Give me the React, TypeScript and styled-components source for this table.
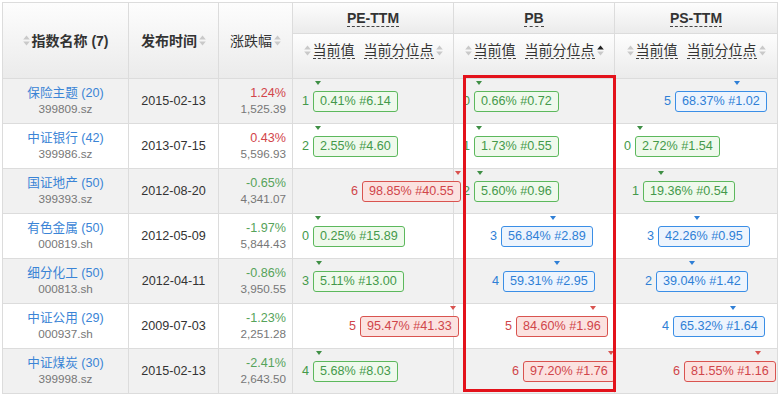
import React from 'react';
import styled, { createGlobalStyle } from 'styled-components';

const GlobalStyle = createGlobalStyle`
  html, body { margin: 0; padding: 0; background: #fff; }
  body {
    font-family: "Liberation Sans", "Noto Sans CJK SC", sans-serif;
    color: #333;
  }
`;

type Tone = 'g' | 'b' | 'r';

const tones: Record<Tone, { text: string; border: string; bg: string; mark: string }> = {
  g: { text: '#44994a', border: '#5cb85c', bg: '#eff9ec', mark: '#3f8f45' },
  b: { text: '#2f7fd6', border: '#3a8ee6', bg: '#edf4fd', mark: '#2f7fd6' },
  r: { text: '#d0454a', border: '#d9534f', bg: '#fbe2e0', mark: '#d9534f' },
};

const toneOf = (p: number): Tone => (p < 20 ? 'g' : p < 80 ? 'b' : 'r');

interface Val { r: number; p: number; v: string; off: number }
interface Row {
  name: string; n: number; code: string; date: string;
  chg: string; up: boolean; idx: string;
  pe: Val; pb: Val; ps: Val;
}

const rows: Row[] = [
  { name: '保险主题', n: 20, code: '399809.sz', date: '2015-02-13', chg: '1.24%', up: true, idx: '1,525.39',
    pe: { r: 1, p: 0.41, v: '6.14', off: 21 }, pb: { r: 0, p: 0.66, v: '0.72', off: 21 }, ps: { r: 5, p: 68.37, v: '1.02', off: 61 } },
  { name: '中证银行', n: 42, code: '399986.sz', date: '2013-07-15', chg: '0.43%', up: true, idx: '5,596.93',
    pe: { r: 2, p: 2.55, v: '4.60', off: 21 }, pb: { r: 1, p: 1.73, v: '0.55', off: 21 }, ps: { r: 0, p: 2.72, v: '1.54', off: 21 } },
  { name: '国证地产', n: 50, code: '399393.sz', date: '2012-08-20', chg: '-0.65%', up: false, idx: '4,341.07',
    pe: { r: 6, p: 98.85, v: '40.55', off: 70 }, pb: { r: 2, p: 5.6, v: '0.96', off: 21 }, ps: { r: 1, p: 19.36, v: '0.54', off: 29 } },
  { name: '有色金属', n: 50, code: '000819.sh', date: '2012-05-09', chg: '-1.97%', up: false, idx: '5,844.43',
    pe: { r: 0, p: 0.25, v: '15.89', off: 21 }, pb: { r: 3, p: 56.84, v: '2.89', off: 48 }, ps: { r: 3, p: 42.26, v: '0.95', off: 44 } },
  { name: '细分化工', n: 50, code: '000813.sh', date: '2012-04-11', chg: '-0.86%', up: false, idx: '3,950.55',
    pe: { r: 3, p: 5.11, v: '13.00', off: 21 }, pb: { r: 4, p: 59.31, v: '2.95', off: 50 }, ps: { r: 2, p: 39.04, v: '1.42', off: 42 } },
  { name: '中证公用', n: 29, code: '000937.sh', date: '2009-07-03', chg: '-1.23%', up: false, idx: '2,251.28',
    pe: { r: 5, p: 95.47, v: '41.33', off: 68 }, pb: { r: 5, p: 84.6, v: '1.96', off: 63 }, ps: { r: 4, p: 65.32, v: '1.64', off: 59 } },
  { name: '中证煤炭', n: 30, code: '399998.sz', date: '2015-02-13', chg: '-2.41%', up: false, idx: '2,643.50',
    pe: { r: 4, p: 5.68, v: '8.03', off: 21 }, pb: { r: 6, p: 97.2, v: '1.76', off: 70 }, ps: { r: 6, p: 81.55, v: '1.16', off: 70 } },
];

const Page = styled.div`
  padding: 2px 0 0 2px;
`;

const Grid = styled.div`
  position: relative;
  display: grid;
  grid-template-columns: 126px 90px 74px 161px 161px 163px;
  grid-template-rows: 31px 45px repeat(7, 45px);
  width: max-content;
  border-top: 1px solid #dcdcdc;
  border-left: 1px solid #dcdcdc;
`;

const HeadCell = styled.div<{ $span?: number; $top?: boolean; $bold?: boolean }>`
  grid-row: span ${(p) => p.$span ?? 1};
  box-sizing: border-box;
  border-right: 1px solid #dcdcdc;
  border-bottom: 1px solid #dcdcdc;
  background: linear-gradient(#fdfdfd, #ebebeb);
  display: flex;
  justify-content: center;
  align-items: ${(p) => (p.$top ? 'flex-start' : 'center')};
  padding-top: ${(p) => (p.$top ? '8px' : '0')};
  gap: 2px;
  font-size: 14px;
  line-height: 16px;
  font-weight: ${(p) => (p.$bold ? 700 : 400)};
  color: #333;
  white-space: nowrap;
`;

const Dashed = styled.span`
  border-bottom: 1px dashed #444;
`;

const SubGroup = styled.span`
  display: flex;
  align-items: center;
  gap: 2px;
`;

const SubHead = styled.div`
  display: flex;
  align-items: center;
  gap: 9px;
`;

const SortSvg = styled.svg`
  flex: none;
  display: block;
`;

const SortIcon: React.FC<{ up?: string; down?: string }> = ({ up = '#c9c9c9', down = '#c9c9c9' }) => (
  <SortSvg width="7" height="11" viewBox="0 0 7 11">
    <path d="M3.5 0.5 L6.8 4.5 L0.2 4.5 Z" fill={up} />
    <path d="M0.2 6.5 L6.8 6.5 L3.5 10.5 Z" fill={down} />
  </SortSvg>
);

const Cell = styled.div<{ $odd: boolean }>`
  box-sizing: border-box;
  border-right: 1px solid #dcdcdc;
  border-bottom: 1px solid #dcdcdc;
  background: ${(p) => (p.$odd ? '#f1f1f1' : '#ffffff')};
  display: flex;
`;

const NameCell = styled(Cell)`
  flex-direction: column;
  align-items: center;
  justify-content: center;
  line-height: 15px;
`;

const NameLink = styled.a`
  color: #3a84d6;
  font-size: 12.6px;
  text-decoration: none;
`;

const Sub = styled.span`
  color: #777;
  font-size: 11.7px;
`;

const DateCell = styled(Cell)`
  align-items: center;
  justify-content: center;
  font-size: 12.6px;
  color: #333;
`;

const ChangeCell = styled(Cell)`
  flex-direction: column;
  align-items: flex-end;
  justify-content: center;
  padding-right: 6px;
  line-height: 15px;
`;

const Chg = styled.span<{ $up: boolean }>`
  font-size: 12.6px;
  color: ${(p) => (p.$up ? '#d2454a' : '#56a35a')};
`;

const ValueCell = styled(Cell)`
  align-items: center;
`;

const Group = styled.div`
  display: flex;
  align-items: center;
  flex: none;
`;

const Num = styled.span<{ $tone: Tone }>`
  width: 7px;
  margin-right: 4px;
  text-align: right;
  font-size: 12.6px;
  color: ${(p) => tones[p.$tone].text};
`;

const Badge = styled.span<{ $tone: Tone }>`
  position: relative;
  box-sizing: border-box;
  height: 21px;
  line-height: 19px;
  padding: 0 6px;
  border: 1px solid ${(p) => tones[p.$tone].border};
  border-radius: 3px;
  background: ${(p) => tones[p.$tone].bg};
  color: ${(p) => tones[p.$tone].text};
  font-size: 12.6px;
  white-space: nowrap;
`;

const Marker = styled.span<{ $tone: Tone }>`
  position: absolute;
  top: -11px;
  transform: translateX(-50%);
  width: 0;
  height: 0;
  border-left: 3.5px solid transparent;
  border-right: 3.5px solid transparent;
  border-top: 4px solid ${(p) => tones[p.$tone].mark};
`;

const Highlight = styled.div`
  position: absolute;
  left: 460px;
  top: 72px;
  width: 153px;
  height: 317px;
  box-sizing: border-box;
  border: 3px solid #e3121b;
  pointer-events: none;
  z-index: 2;
`;

const ValueView: React.FC<{ val: Val; odd: boolean }> = ({ val, odd }) => {
  const tone = toneOf(val.p);
  return (
    <ValueCell $odd={odd}>
      <Group style={{ marginLeft: val.off - 12 }}>
        <Num $tone={tone}>{val.r}</Num>
        <Badge $tone={tone}>
          <Marker $tone={tone} style={{ left: `clamp(4px, ${val.p}%, calc(100% - 2px))` }} />
          {val.p.toFixed(2)}% #{val.v}
        </Badge>
      </Group>
    </ValueCell>
  );
};

const Metric: React.FC<{ label: string }> = ({ label }) => (
  <HeadCell $bold>
    <Dashed>{label}</Dashed>
  </HeadCell>
);

const MetricSub: React.FC<{ active?: boolean }> = ({ active }) => (
  <HeadCell $top>
    <SubHead>
      <SubGroup>
        <SortIcon />
        <Dashed>当前值</Dashed>
      </SubGroup>
      <SubGroup>
        <Dashed>当前分位点</Dashed>
        {active ? <SortIcon up="#222" down="#c9c9c9" /> : <SortIcon />}
      </SubGroup>
    </SubHead>
  </HeadCell>
);

export default function App() {
  return (
    <Page>
      <GlobalStyle />
      <Grid>
        <HeadCell $span={2} $bold>
          <SortIcon />
          <span>指数名称 (7)</span>
        </HeadCell>
        <HeadCell $span={2} $bold>
          <span>发布时间</span>
          <SortIcon />
        </HeadCell>
        <HeadCell $span={2}>
          <span>涨跌幅</span>
          <SortIcon />
        </HeadCell>
        <Metric label="PE-TTM" />
        <Metric label="PB" />
        <Metric label="PS-TTM" />
        <MetricSub />
        <MetricSub active />
        <MetricSub />
        {rows.map((r, i) => {
          const odd = i % 2 === 0;
          return (
            <React.Fragment key={r.code}>
              <NameCell $odd={odd}>
                <NameLink href="#">{r.name} ({r.n})</NameLink>
                <Sub>{r.code}</Sub>
              </NameCell>
              <DateCell $odd={odd}>{r.date}</DateCell>
              <ChangeCell $odd={odd}>
                <Chg $up={r.up}>{r.chg}</Chg>
                <Sub>{r.idx}</Sub>
              </ChangeCell>
              <ValueView val={r.pe} odd={odd} />
              <ValueView val={r.pb} odd={odd} />
              <ValueView val={r.ps} odd={odd} />
            </React.Fragment>
          );
        })}
        <Highlight />
      </Grid>
    </Page>
  );
}
